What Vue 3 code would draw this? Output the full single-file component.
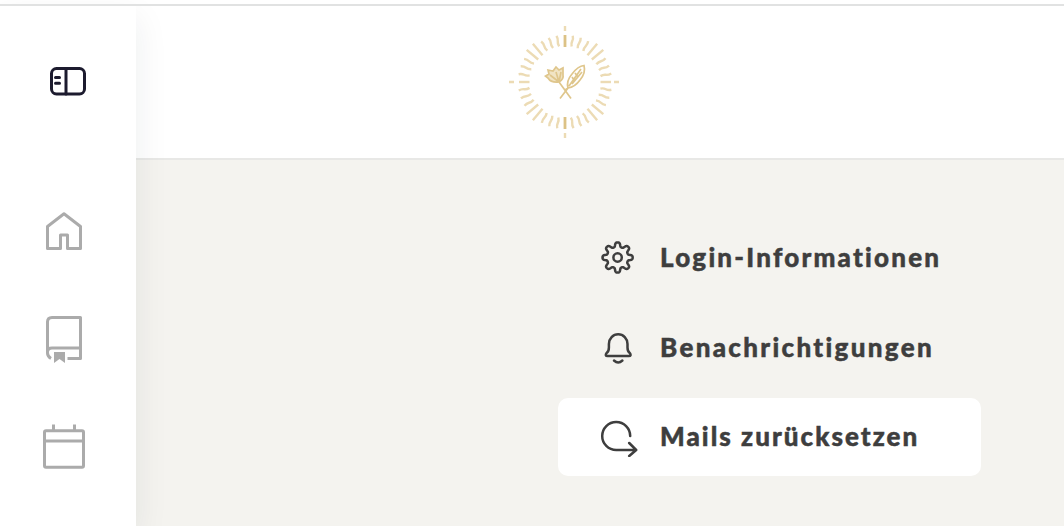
<script setup>
import { ref } from 'vue'

const active = ref('mails')

const menu = [
  { id: 'login', label: 'Login-Informationen' },
  { id: 'notify', label: 'Benachrichtigungen' },
  { id: 'mails', label: 'Mails zurücksetzen' }
]

// gear outline with eight rounded teeth
const gearPoints = Array.from({ length: 160 }, (_, i) => {
  const a = (i / 160) * Math.PI * 2
  const r = 12.9 + 2.3 * Math.tanh(1.8 * Math.cos(8 * a))
  return `${(19.6 + r * Math.sin(a)).toFixed(2)},${(20.5 - r * Math.cos(a)).toFixed(2)}`
}).join(' ')

// sunburst rays every 10 degrees, slightly wavy between the axes
const rays = Array.from({ length: 36 }, (_, i) => i * 10)
  .filter(a => a % 180 !== 0)
  .map(a => {
    if (a % 90 === 0) return { a, d: 'M0-46V-35.5' }
    if ([40, 50].includes(a % 90)) return { a, d: 'M0-50V-35' }
    return { a, d: 'M-.4-47Q.8-44 0-41.5Q-.8-39 .4-36' }
  })
</script>

<template>
  <div class="page">
    <aside class="sidebar">
      <svg class="toggle" width="38" height="30" viewBox="0 0 38 30">
        <rect x="2.5" y="2.5" width="33" height="25.5" rx="5" />
        <path d="M17 2.5V28M6.5 11.5h4M6.5 17.3h4" />
      </svg>
      <nav class="nav">
        <svg class="home" width="44" height="44" viewBox="0 0 44 44">
          <path d="M5.5 16.5 22 3.8 38.5 16.5V38.5H25.5V25H18.5V38.5H5.5Z" />
        </svg>
        <svg class="book" width="44" height="52" viewBox="0 0 44 52">
          <path d="M9 44.5C6.5 43 5.5 41 5.5 39V8Q5.5 3.5 10 3.5H38.5V44.5H25.5M5.5 38Q5.5 34 10 34H38.5" />
          <path class="mark" d="M12 38h11v11l-5.5-4-5.5 4z" />
        </svg>
        <svg class="calendar" width="44" height="48" viewBox="0 0 44 48">
          <rect x="2.5" y="8.8" width="39" height="36.5" rx="1.5" />
          <path d="M2.5 19H41.5M11.5 2.5V8M32.5 2.5V8" />
        </svg>
      </nav>
    </aside>
    <div class="content">
      <header class="header">
        <svg class="logo" width="112" height="114" viewBox="-56 -57 112 114">
          <path v-for="ray in rays" :key="ray.a" :d="ray.d" :transform="`rotate(${ray.a})`" />
          <path d="M0-56V-51M0 51V56M-56 0H-51M49 0H54" />
          <path class="strong" d="M0-47V-35M0 35V47" />
          <g class="flower">
            <path d="M-5 16.5 3 6Q1-1 7-8Q13-16 19-16.5Q21-9 15-2Q10 5 3 6L0 8M4 4 16-13M7-5 9-2M10-9 13-5M7 2 17-10" />
            <path d="M6 16.5-6 0" />
            <path
              class="petals"
              d="M-6 0Q-14 1-17-4L-19.5-6-16-8-17-12-12-11-9-15-6-12-2-14-2-7Q-1-3-6 0M-6 0-9-10M-6 0-15-7M-6 0-4-10"
            />
          </g>
        </svg>
      </header>
      <main class="main">
        <ul class="menu">
          <li
            v-for="item in menu"
            :key="item.id"
            class="item"
            :class="[item.id, { active: item.id === active }]"
            @click="active = item.id"
          >
            <svg class="icon" width="40" height="40" viewBox="0 0 40 40">
              <template v-if="item.id === 'login'">
                <polygon :points="gearPoints" />
                <circle cx="19.6" cy="20.5" r="4.2" />
              </template>
              <template v-else-if="item.id === 'notify'">
                <path d="M10.9 17A9.3 9.8 0 0 1 29.5 17V20.5Q29.5 24.5 31.8 26Q33.8 29 30.8 29H9.6Q6.6 29 8.6 26Q10.9 24.5 10.9 20.5Z" />
                <path d="M16 33.5Q20.2 37.5 24.4 33.5" />
              </template>
              <path v-else d="M32.2 19A14 14 0 1 0 18.2 33H38M31.2 26 38.2 33 31.2 39" />
            </svg>
            <span class="label">{{ item.label }}</span>
          </li>
        </ul>
      </main>
    </div>
  </div>
</template>

<style>
body {
  margin: 0;
  overflow: hidden;
}
</style>

<style scoped>
.page {
  display: flex;
  box-sizing: border-box;
  width: 100vw;
  height: 526px;
  padding-top: 4px;
  background: #fff;
  overflow: hidden;
}

.page::before {
  content: '';
  position: absolute;
  top: 4px;
  left: 0;
  width: 100%;
  height: 2px;
  background: #e1e2e2;
  z-index: 3;
}

.sidebar {
  position: relative;
  z-index: 2;
  display: flex;
  flex-direction: column;
  flex: 0 0 136px;
  box-sizing: border-box;
  padding-top: 62px;
  margin-top: 2px;
  background: #fff;
  box-shadow: 0 12px 32px rgba(30, 35, 55, 0.08);
}

.sidebar svg {
  display: block;
  fill: none;
  stroke: #ababab;
  stroke-width: 3;
  stroke-linejoin: round;
}

.sidebar .toggle {
  margin-left: 49px;
  margin-top: -2px;
  stroke: #1c1b2e;
  stroke-linecap: round;
}

.nav {
  display: flex;
  flex-direction: column;
  align-items: center;
  padding-right: 8px;
  margin-top: 114px;
}

.book {
  margin-top: 60px;
}

.calendar {
  margin-top: 56px;
}

.sidebar .mark {
  fill: #ababab;
  stroke: none;
}

.content {
  flex: 1;
  display: flex;
  flex-direction: column;
}

.header {
  display: flex;
  justify-content: center;
  box-sizing: border-box;
  height: 156px;
  padding-top: 21px;
  padding-right: 70px;
  background: #fff;
  border-bottom: 2px solid #e8e8e6;
}

.logo {
  fill: none;
  stroke: #ecdbb4;
  stroke-width: 2.4;
  filter: blur(0.6px);
}

.logo .strong {
  stroke: #dcc286;
  stroke-width: 2.8;
}

.logo .flower {
  stroke: #dfc68c;
  stroke-width: 1.7;
}

.logo .petals {
  fill: #f1e4c4;
}

.main {
  flex: 1;
  background: #f4f3ef;
}

.menu {
  display: flex;
  flex-direction: column;
  gap: 12px;
  width: 423px;
  margin: 58px 0 0 422px;
  padding: 0;
  list-style: none;
}

.item {
  display: flex;
  align-items: center;
  box-sizing: border-box;
  height: 78px;
  padding-left: 40px;
  border-radius: 10px;
  color: #3e3e3e;
  cursor: pointer;
}

.item.active {
  background: #fff;
}

.icon {
  flex: none;
  fill: none;
  stroke: #3e3e3e;
  stroke-width: 2.5;
  stroke-linecap: round;
  stroke-linejoin: round;
}

.label {
  margin-left: 22px;
  font-family: Lato, 'Liberation Sans', sans-serif;
  font-size: 26px;
  font-weight: 900;
  letter-spacing: 2.22px;
  white-space: nowrap;
  -webkit-text-stroke: 0.5px currentColor;
}

.notify .label {
  letter-spacing: 2.32px;
}

.mails .label {
  margin-top: -2px;
  letter-spacing: 2.05px;
}
</style>
